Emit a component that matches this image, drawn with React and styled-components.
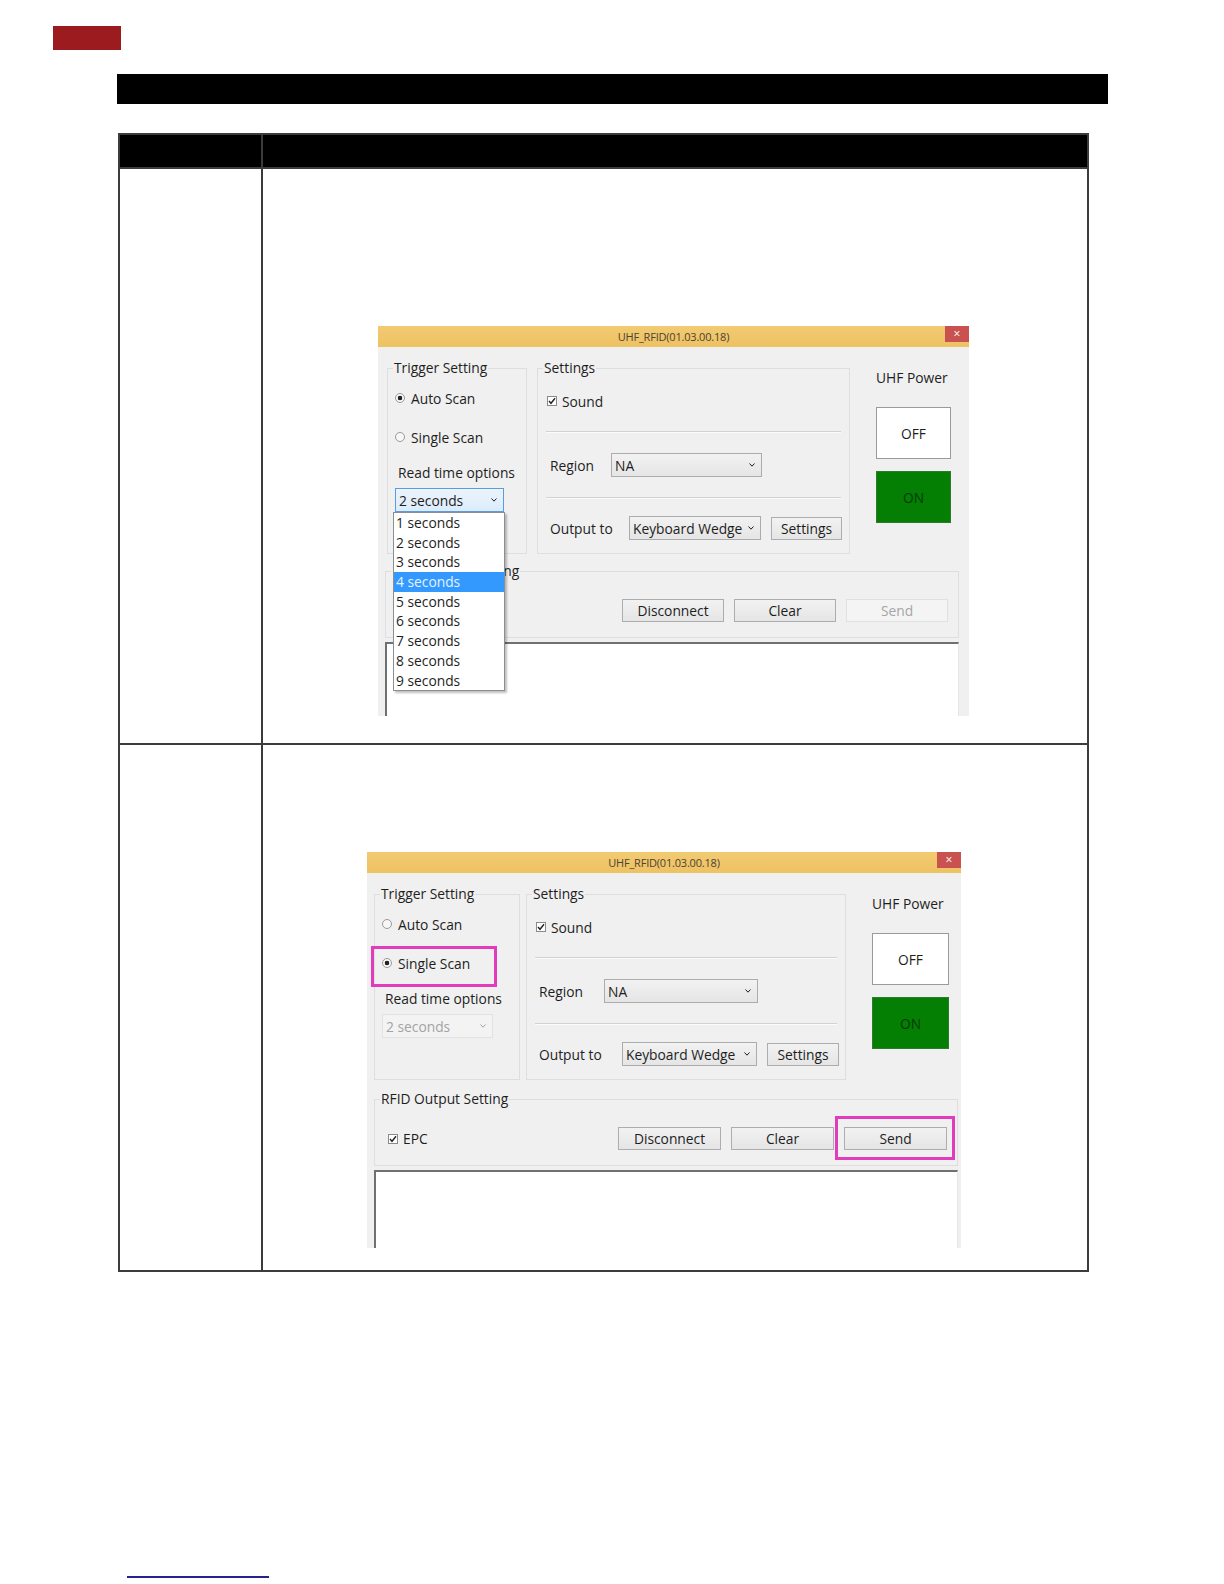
import React from 'react'
import styled, { createGlobalStyle, css } from 'styled-components'

const SECONDS = [1, 2, 3, 4, 5, 6, 7, 8, 9]
const MAGENTA = '#e23cbc'

const GlobalStyle = createGlobalStyle`
  html, body {
    margin: 0;
    padding: 0;
    background: #fff;
  }
  body {
    font-family: 'Open Sans', 'Noto Sans', sans-serif;
  }
`

const Page = styled.div`
  width: 1224px;
  min-height: 1584px;
  display: flex;
  flex-direction: column;
  align-items: flex-start;
`

const ChapterTab = styled.div`
  margin: 26px 0 0 53px;
  width: 68px;
  height: 24px;
  background: #9b1b1f;
`

const SectionBar = styled.div`
  margin: 24px 0 0 117px;
  width: 991px;
  height: 30px;
  background: #000;
`

const Table = styled.div`
  margin: 29px 0 0 118px;
  width: 971px;
  box-sizing: border-box;
  border: 2px solid #3c3c3c;
  background: #3c3c3c;
  display: grid;
  grid-template-columns: 141px 1fr;
  gap: 2px;
`

const Cell = styled.div`
  background: ${p => (p.$head ? '#000' : '#fff')};
  height: ${p => (p.$head ? '32px' : 'auto')};
  padding: ${p => p.$pad || '0'};
`

const FooterRule = styled.div`
  margin: 304px 0 0 127px;
  width: 142px;
  height: 2px;
  background: #23238c;
`

/* ---------- the UHF_RFID window ---------- */

const Window = styled.div`
  width: ${p => p.$w}px;
  height: ${p => p.$h}px;
  margin-left: ${p => p.$x}px;
  background: #f0f0f0;
  display: flex;
  flex-direction: column;
  font-size: 13.8px;
  color: #1e1e1e;
`

const TitleBar = styled.div`
  flex: none;
  height: 21px;
  background: linear-gradient(#f2ca71, #edc263);
  display: grid;
  grid-template-columns: 1fr auto 1fr;
  align-items: center;
`

const TitleText = styled.span`
  font-size: 11px;
  color: #4d4233;
  letter-spacing: -0.2px;
`

const CloseBox = styled.span`
  justify-self: end;
  align-self: start;
  width: 24px;
  height: 16px;
  background: #c9514f;
  color: #fff;
  font-size: 12px;
  line-height: 15px;
  text-align: center;
`

const Body = styled.div`
  flex: 1;
  display: flex;
  flex-direction: column;
  padding: 12px ${p => p.$padR}px 0 7px;
  min-height: 0;
`

const TopRow = styled.div`
  display: flex;
  align-items: stretch;
  gap: ${p => p.$gap}px;
`

const Group = styled.fieldset`
  margin: ${p => p.$top || 0}px 0 0 ${p => p.$ml || 0}px;
  padding: 0 7px ${p => p.$pb || 0}px;
  border: 1px solid #dedede;
  min-width: 0;
  box-sizing: border-box;
  width: ${p => (p.$w ? `${p.$w}px` : 'auto')};
  display: flex;
  flex-direction: column;
  align-items: flex-start;
`

const Legend = styled.legend`
  padding: 0 1px;
  margin-left: -2px;
  line-height: 18px;
`

const OptionRow = styled.div`
  position: relative;
  display: inline-flex;
  align-items: center;
  gap: ${p => p.$gap || 6}px;
  height: 20px;
  margin: ${p => p.$top || 0}px 0 0 ${p => p.$ml || 0}px;

  ${p => p.$hl && css`
    &::after {
      content: '';
      position: absolute;
      top: -7px;
      bottom: -14px;
      left: -11px;
      right: -27px;
      border: 3px solid ${MAGENTA};
      pointer-events: none;
    }
  `}
`

const Radio = styled.span`
  width: 10px;
  height: 10px;
  box-sizing: border-box;
  border-radius: 50%;
  border: 1px solid #9a9a9a;
  background: ${p => (p.$on
    ? 'radial-gradient(circle, #222 0 2px, #f6f6f6 2.6px)'
    : '#f7f7f7')};
`

const CheckBox = styled.span`
  width: 10px;
  height: 10px;
  box-sizing: border-box;
  border: 1px solid #8a8a8a;
  background: #fff;
  display: flex;
  align-items: center;
  justify-content: center;
`

const SubLabel = styled.div`
  margin: 16px 0 0 3px;
  line-height: 20px;
`

const ComboWrap = styled.div`
  position: relative;
  margin-top: 5px;
`

const Combo = styled.div`
  width: ${p => p.$w}px;
  height: 24px;
  box-sizing: border-box;
  padding: 0 6px 0 3px;
  display: flex;
  align-items: center;
  justify-content: space-between;
  border: 1px solid #acacac;
  background: linear-gradient(#f2f2f2, #e5e5e5);
  color: #1e1e1e;

  ${p => p.$state === 'open' && css`
    border-color: #569de5;
    background: linear-gradient(#ecf4fc, #dcecfc);
  `}
  ${p => p.$state === 'disabled' && css`
    border-color: #e2e2e2;
    background: #f3f3f3;
    color: #a3a3a3;
  `}
`

const DropList = styled.div`
  position: absolute;
  z-index: 5;
  top: 100%;
  left: -2px;
  width: 112px;
  box-sizing: border-box;
  border: 1px solid #8a8f96;
  background: #fff;
  box-shadow: 2px 2px 2px rgba(0, 0, 0, 0.25);
`

const DropItem = styled.div`
  height: 19.7px;
  line-height: 19.7px;
  padding-left: 2px;
  background: ${p => (p.$sel ? '#3399ff' : 'transparent')};
  color: ${p => (p.$sel ? '#e4f2ff' : '#1e1e1e')};
`

const Groove = styled.div`
  align-self: stretch;
  margin: ${p => p.$m};
  border-top: 1px solid #d2d2d2;
  border-bottom: 1px solid #fbfbfb;
`

const FieldRow = styled.div`
  display: flex;
  align-items: center;
  height: 24px;
  padding-left: 5px;
`

const FieldLabel = styled.span`
  width: ${p => p.$w}px;
  flex: none;
`

const WinButton = styled.button`
  width: ${p => p.$w}px;
  height: 23px;
  margin-left: ${p => p.$ml || 0}px;
  padding: 0;
  box-sizing: border-box;
  border: 1px solid #adadad;
  border-radius: 0;
  background: linear-gradient(#f2f2f2, #e5e5e5);
  font: inherit;
  color: #1e1e1e;

  &:disabled {
    border-color: #e0e0e0;
    background: #f4f4f4;
    color: #a6a6a6;
  }
`

const Marked = styled.span`
  position: relative;
  display: inline-flex;

  ${p => p.$hl && css`
    &::after {
      content: '';
      position: absolute;
      top: -11px;
      bottom: -10px;
      left: -9px;
      right: -8px;
      border: 3px solid ${MAGENTA};
      pointer-events: none;
    }
  `}
`

const PowerColumn = styled.div`
  margin-left: ${p => p.$ml}px;
  display: flex;
  flex-direction: column;
  align-items: flex-start;
`

const PowerLabel = styled.div`
  margin-top: 10px;
  line-height: 18px;
`

const PowerButton = styled.div`
  width: ${p => p.$w}px;
  height: 52px;
  margin-top: ${p => (p.$on ? 12 : 20)}px;
  box-sizing: border-box;
  display: flex;
  align-items: center;
  justify-content: center;
  border: 1px solid ${p => (p.$on ? '#2f7a2f' : '#9a9a9a')};
  background: ${p => (p.$on ? '#047f04' : '#fff')};
  color: ${p => (p.$on ? '#053a05' : '#1e1e1e')};
`

const ActionRow = styled.div`
  align-self: stretch;
  display: flex;
  align-items: center;
  justify-content: space-between;
  margin-top: 19px;
  padding: 0 3px 15px 6px;
`

const ButtonRow = styled.div`
  display: flex;
  gap: 10px;
`

const OutputBox = styled.div`
  flex: 1;
  margin-top: 4px;
  background: #fff;
  border-top: 2px solid #707070;
  border-left: 2px solid #707070;
  border-right: 1px solid #e6e6e6;
`

const Chevron = () => (
  <svg width="6" height="4" viewBox="0 0 6 4">
    <polyline points="0.5,0.5 3,3.2 5.5,0.5" fill="none" stroke="currentColor" strokeWidth="1" />
  </svg>
)

const Tick = () => (
  <svg width="8" height="8" viewBox="0 0 8 8">
    <polyline points="1,4 3,6.3 7,1.3" fill="none" stroke="#222" strokeWidth="1.4" />
  </svg>
)

const UhfWindow = ({ open, marked, g }) => (
  <Window $w={g.w} $h={g.h} $x={g.x}>
    <TitleBar>
      <span />
      <TitleText>UHF_RFID(01.03.00.18)</TitleText>
      <CloseBox>×</CloseBox>
    </TitleBar>

    <Body $padR={g.padR}>
      <TopRow $gap={g.gap}>
        <Group $w={g.trigW} $ml={g.trigML}>
          <Legend>Trigger Setting</Legend>
          <OptionRow $top={11}>
            <Radio $on={open} />
            Auto Scan
          </OptionRow>
          <OptionRow $top={19} $hl={marked}>
            <Radio $on={!open} />
            Single Scan
          </OptionRow>
          <SubLabel>Read time options</SubLabel>
          <ComboWrap>
            <Combo $w={g.rtW} $state={open ? 'open' : 'disabled'}>
              2 seconds
              <Chevron />
            </Combo>
            {open && (
              <DropList>
                {SECONDS.map(n => (
                  <DropItem key={n} $sel={n === 4}>{n} seconds</DropItem>
                ))}
              </DropList>
            )}
          </ComboWrap>
        </Group>

        <Group $w={g.setW} $pb={13}>
          <Legend>Settings</Legend>
          <OptionRow $top={14} $ml={2} $gap={5}>
            <CheckBox><Tick /></CheckBox>
            Sound
          </OptionRow>
          <Groove $m="20px 1px 20px" />
          <FieldRow>
            <FieldLabel $w={g.regL}>Region</FieldLabel>
            <Combo $w={g.regW}>
              NA
              <Chevron />
            </Combo>
          </FieldRow>
          <Groove $m="20px 1px 17px" />
          <FieldRow>
            <FieldLabel $w={g.outL}>Output to</FieldLabel>
            <Combo $w={g.kwW}>
              Keyboard Wedge
              <Chevron />
            </Combo>
            <WinButton $w={g.setBtnW} $ml={10}>Settings</WinButton>
          </FieldRow>
        </Group>

        <PowerColumn $ml={g.uhfGap}>
          <PowerLabel>UHF Power</PowerLabel>
          <PowerButton $w={g.uhfW}>OFF</PowerButton>
          <PowerButton $w={g.uhfW} $on>ON</PowerButton>
        </PowerColumn>
      </TopRow>

      <Group $top={g.rfidTop}>
        <Legend>RFID Output Setting</Legend>
        <ActionRow>
          <OptionRow $gap={5}>
            <CheckBox><Tick /></CheckBox>
            EPC
          </OptionRow>
          <ButtonRow>
            <WinButton $w={g.btnW}>Disconnect</WinButton>
            <WinButton $w={g.btnW}>Clear</WinButton>
            <Marked $hl={marked}>
              <WinButton $w={g.btnW} disabled={open}>Send</WinButton>
            </Marked>
          </ButtonRow>
        </ActionRow>
      </Group>

      <OutputBox />
    </Body>
  </Window>
)

const FIRST = {
  x: 115, w: 591, h: 390, padR: 10, gap: 10, rfidTop: 8,
  trigML: 2, trigW: 140, rtW: 109, setW: 313, uhfGap: 16, uhfW: 75,
  regL: 61, regW: 151, outL: 79, kwW: 132, setBtnW: 71, btnW: 102,
}

const SECOND = {
  x: 104, w: 594, h: 396, padR: 3, gap: 6, rfidTop: 10,
  trigML: 0, trigW: 146, rtW: 111, setW: 320, uhfGap: 20, uhfW: 77,
  regL: 65, regW: 154, outL: 83, kwW: 135, setBtnW: 72, btnW: 103,
}

const App = () => (
  <Page>
    <GlobalStyle />
    <ChapterTab />
    <SectionBar />

    <Table>
      <Cell $head />
      <Cell $head />

      <Cell />
      <Cell $pad="157px 0 27px">
        <UhfWindow open g={FIRST} />
      </Cell>

      <Cell />
      <Cell $pad="107px 0 22px">
        <UhfWindow marked g={SECOND} />
      </Cell>
    </Table>

    <FooterRule />
  </Page>
)

export default App
